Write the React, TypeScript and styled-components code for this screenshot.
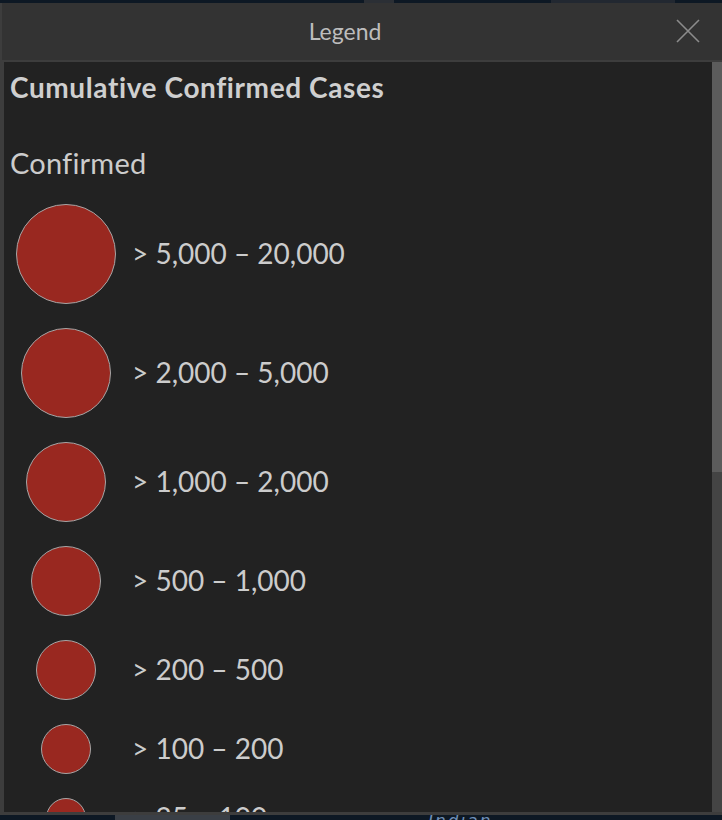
import React from "react";
import styled, { createGlobalStyle } from "styled-components";

const Global = createGlobalStyle`
  html, body { margin: 0; padding: 0; }
  body {
    width: 722px;
    height: 820px;
    overflow: hidden;
    background: #0d1824;
    font-family: Lato, "Noto Sans", "Liberation Sans", sans-serif;
  }
`;

const Page = styled.div`
  width: 722px;
  height: 820px;
  display: flex;
  flex-direction: column;
`;

const MapEdge = styled.div<{ $h: number }>`
  height: ${(p) => p.$h}px;
  flex: none;
  position: relative;
  overflow: hidden;
  background: #0d1824;
  display: flex;
`;

const MapBit = styled.div<{ $w: number; $c: string; $ml: number }>`
  width: ${(p) => p.$w}px;
  margin-left: ${(p) => p.$ml}px;
  background: ${(p) => p.$c};
  height: 100%;
`;

const OceanLabel = styled.span`
  position: absolute;
  left: 428px;
  top: -4px;
  font-family: "DejaVu Sans", sans-serif;
  font-style: italic;
  font-size: 17px;
  letter-spacing: 2px;
  color: #6f8fb8;
  line-height: 20px;
`;

const Panel = styled.section`
  flex: 1;
  min-height: 0;
  display: flex;
  flex-direction: column;
  background: #3d3d3d;
  border-left: 2px solid #3d3d3d;
  border-bottom: 3px solid #3d3d3d;
`;

const Header = styled.header`
  height: 57px;
  flex: none;
  background: #333333;
  border-bottom: 2px solid #3d3d3d;
  display: grid;
  grid-template-columns: 1fr 46px;
  align-items: center;
`;

const Title = styled.h2`
  margin: 0;
  text-align: center;
  font-weight: 400;
  font-size: 23px;
  color: #bdbdbd;
  padding-left: 12px;
  padding-bottom: 2px;
`;

const Close = styled.button`
  background: none;
  border: 0;
  padding: 0;
  width: 24px;
  height: 24px;
  margin-bottom: 1px;
  display: flex;
  cursor: pointer;
`;

const Body = styled.div`
  flex: 1;
  min-height: 0;
  margin-left: 2px;
  display: grid;
  grid-template-columns: 1fr 10px;
`;

const Content = styled.div`
  background: #222222;
  overflow: hidden;
  padding: 8px 6px 0;
  color: #cccccc;
`;

const Track = styled.div`
  background: #444444;
`;

const Thumb = styled.div`
  height: 410px;
  background: #5c5c5c;
`;

const LayerTitle = styled.h3`
  margin: 0;
  font-size: 28px;
  font-weight: 700;
  line-height: 34px;
  letter-spacing: 0.6px;
  color: #cfcfcf;
`;

const FieldTitle = styled.div`
  margin-top: 42px;
  font-size: 29px;
  line-height: 34px;
  letter-spacing: 0.2px;
  color: #cccccc;
`;

const List = styled.div`
  margin-top: 12px;
  display: flex;
  flex-direction: column;
`;

const Row = styled.div`
  display: flex;
  align-items: center;
  padding: 12px 0;
`;

const SymbolCell = styled.div`
  width: 101px;
  margin-left: 5px;
  display: flex;
  justify-content: center;
  flex: none;
`;

const Dot = styled.div<{ $d: number }>`
  width: ${(p) => p.$d}px;
  height: ${(p) => p.$d}px;
  border-radius: 50%;
  box-sizing: border-box;
  background: #992820;
  border: 1.5px solid #a6a6a6;
`;

const Label = styled.div`
  margin-left: 16px;
  margin-bottom: 3px;
  font-size: 28px;
  color: #cccccc;
  white-space: nowrap;
`;

const classes = [
  { d: 100, label: "> 5,000 – 20,000" },
  { d: 90, label: "> 2,000 – 5,000" },
  { d: 80, label: "> 1,000 – 2,000" },
  { d: 70, label: "> 500 – 1,000" },
  { d: 60, label: "> 200 – 500" },
  { d: 50, label: "> 100 – 200" },
  { d: 40, label: "> 25 – 100" },
];

export default function App() {
  return (
    <Page>
      <Global />
      <MapEdge $h={3}>
        <MapBit $w={30} $ml={364} $c="#2b2f35" />
        <MapBit $w={124} $ml={157} $c="#222831" />
      </MapEdge>
      <Panel>
        <Header>
          <Title>Legend</Title>
          <Close aria-label="Close">
            <svg width="24" height="24" viewBox="0 0 24 24">
              <path d="M1 1 L23 23 M23 1 L1 23" stroke="#8c8c8c" strokeWidth="1.6" fill="none" />
            </svg>
          </Close>
        </Header>
        <Body>
          <Content>
            <LayerTitle>Cumulative Confirmed Cases</LayerTitle>
            <FieldTitle>Confirmed</FieldTitle>
            <List>
              {classes.map((c) => (
                <Row key={c.label}>
                  <SymbolCell>
                    <Dot $d={c.d} />
                  </SymbolCell>
                  <Label>{c.label}</Label>
                </Row>
              ))}
            </List>
          </Content>
          <Track>
            <Thumb />
          </Track>
        </Body>
      </Panel>
      <MapEdge $h={5}>
        <MapBit $w={115} $ml={115} $c="#3a3f46" />
        <OceanLabel>Indian</OceanLabel>
      </MapEdge>
    </Page>
  );
}
